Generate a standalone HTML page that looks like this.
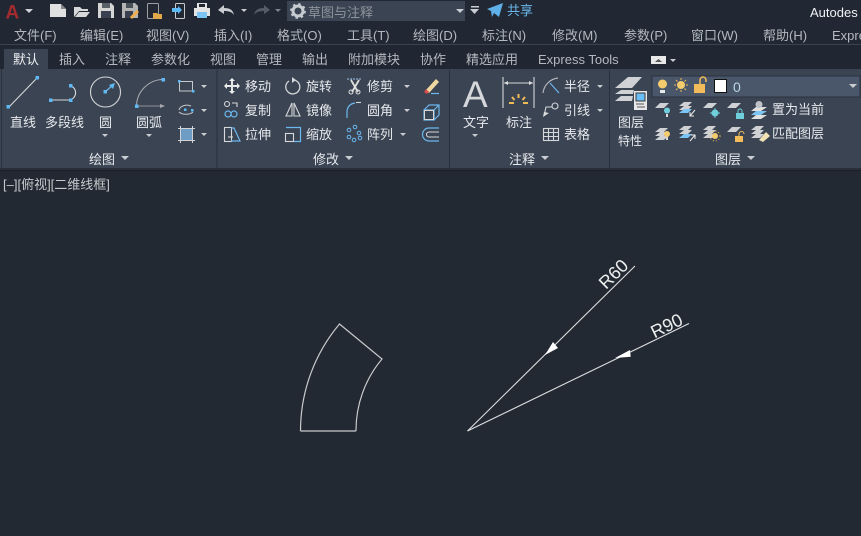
<!DOCTYPE html>
<html><head><meta charset="utf-8">
<style>
html,body{margin:0;padding:0;background:#222932;width:861px;height:536px;overflow:hidden}
svg{display:block;position:absolute;left:0;top:0}
text{font-family:"Liberation Sans","Noto Sans CJK SC",sans-serif;font-size:13px}
.m text{fill:#b4b9bf}
.r text{fill:#e6e9ec}
.d{fill:#d8dadd}
.b{fill:#5fb9f5}
.ln{fill:none;stroke:#d5d7da;stroke-width:1.1}
.bl{fill:none;stroke:#6bb8ee;stroke-width:1.2}
</style></head><body>
<svg width="861" height="536" viewBox="0 0 861 536" xmlns="http://www.w3.org/2000/svg">
<rect width="861" height="536" fill="#222932"/>
<!-- top chrome -->
<rect x="0" y="0" width="861" height="44" fill="#212833"/>
<rect x="0" y="44" width="861" height="1" fill="#3a4350"/>
<rect x="0" y="45" width="861" height="24" fill="#202733"/>
<rect x="4" y="49" width="44" height="20" fill="#3b4453"/>
<!-- ribbon -->
<rect x="0" y="69" width="861" height="99" fill="#3b4453"/>
<rect x="0" y="168" width="861" height="2" fill="#2a303a"/>
<rect x="0" y="170" width="861" height="1" fill="#1b2028"/>
<rect x="1" y="69" width="1" height="99" fill="#2d3440"/>
<rect x="216.500" y="70" width="1" height="98" fill="#2a303b"/>
<rect x="449" y="70" width="1" height="98" fill="#2a303b"/>
<rect x="609" y="70" width="1" height="98" fill="#2a303b"/>
<!-- quick access -->
<text x="5.500" y="18.500" style="font-size:19px;font-weight:bold" fill="#a32b2d">A</text>
<polygon points="25,9 33,9 29,13" fill="#cfd2d6"/>
<path d="M50 4H61L66 9V17H50Z" fill="#e0e0e0"/><path d="M61 4V9H66Z" fill="#888"/>
<path d="M74 7H80L82 9H88V11H79L74 17ZM79 12H90L86 17H75Z" fill="#d8d8d8"/>
<path d="M98 3H111L114 6V18H98Z" fill="#d5d5d5"/><rect x="102" y="3" width="8" height="5" fill="#5a6068"/><rect x="101" y="11" width="10" height="7" fill="#3a4050"/>
<path d="M122 3H135L138 6V18H122Z" fill="#b5b5b5"/><rect x="126" y="3" width="7" height="5" fill="#4a5058"/><rect x="125" y="11" width="8" height="7" fill="#3a4050"/>
<path d="M130 17L137 10L139 12L132 19Z" fill="#f2b04a"/>
<rect x="147.500" y="3.500" width="11" height="15" rx="1" fill="none" stroke="#9b9fa4"/><path d="M153 13H157L158 14H162V19H153Z" fill="#e2a94a"/>
<rect x="175.500" y="3.500" width="9" height="15" rx="1" fill="none" stroke="#c8cacc"/><path d="M172 8H178V6L182 10L178 14V12H172Z" fill="#5fb9f5"/>
<rect x="197" y="3" width="10" height="5" fill="#e4e4e4"/><rect x="194" y="8" width="16" height="8" fill="#e4e4e4"/><rect x="197" y="12" width="10" height="6" fill="#7cc4f3"/><rect x="199" y="4" width="6" height="3" fill="#212833"/>
<path d="M218 10L224 5V8C230 8 233 10 234 15C232 12 229 11 224 11V14Z" fill="#c9ccd0"/>
<polygon points="241,9 247,9 244,12" fill="#c9ccd0"/>
<path d="M270 10L264 5V8C258 8 255 10 254 15C256 12 259 11 264 11V14Z" fill="#555c66"/>
<polygon points="275,9 281,9 278,12" fill="#7f858d"/>
<rect x="287" y="1" width="178" height="20" fill="#3a4452"/>
<circle cx="298" cy="11" r="5" fill="none" stroke="#c8cbcf" stroke-width="3"/><circle cx="298" cy="11" r="7" fill="none" stroke="#c8cbcf" stroke-width="1.800" stroke-dasharray="2.500 3"/>
<text x="308" y="17" fill="#8d949d">草图与注释</text>
<polygon points="456,9 464,9 460,13" fill="#c9ccd0"/>
<rect x="471" y="6" width="8" height="1.500" fill="#c9ccd0"/><polygon points="470,9 479,9 474.500,14" fill="#c9ccd0"/>
<path d="M487 9L503 3L499 17L494 13L492 17L491 11Z" fill="#5fb0e8"/>
<text x="507" y="15" fill="#6bb8ec">共享</text>
<text x="810" y="17" fill="#f0f2f4">Autodes</text>
<!-- menu -->
<g class="m">
<text x="14" y="40">文件(F)</text><text x="80" y="40">编辑(E)</text><text x="146" y="40">视图(V)</text><text x="214" y="40">插入(I)</text><text x="277" y="40">格式(O)</text><text x="347" y="40">工具(T)</text><text x="413" y="40">绘图(D)</text><text x="482" y="40">标注(N)</text><text x="552" y="40">修改(M)</text><text x="624" y="40">参数(P)</text><text x="691" y="40">窗口(W)</text><text x="763" y="40">帮助(H)</text><text x="832" y="40">Expre</text>
</g>
<!-- tabs -->
<g class="m">
<text x="13" y="64" style="fill:#eef0f2">默认</text><text x="59" y="64">插入</text><text x="105" y="64">注释</text><text x="151" y="64">参数化</text><text x="210" y="64">视图</text><text x="256" y="64">管理</text><text x="302" y="64">输出</text><text x="348" y="64">附加模块</text><text x="420" y="64">协作</text><text x="466" y="64">精选应用</text><text x="538" y="64">Express Tools</text>
</g>
<rect x="651" y="56" width="15" height="8" fill="#e8e8e8"/><polygon points="655,62 662,62 658.500,59" fill="#555"/>
<polygon points="670,59 676,59 673,62" fill="#c9ccd0"/>
<!-- draw panel -->
<path d="M9 107L37 78" class="ln"/><rect x="6.500" y="105" width="3.500" height="3.500" class="b"/><rect x="35.500" y="76" width="3.500" height="3.500" class="b"/>
<path d="M51 100H70A7.500 7.500 0 0 0 70 85.500" class="ln"/><rect x="49" y="98.500" width="3.500" height="3.500" class="b"/><rect x="69" y="98.500" width="3.500" height="3.500" class="b"/><rect x="69" y="84" width="3.500" height="3.500" class="b"/>
<circle cx="105.500" cy="92" r="15" class="ln"/><rect x="103.500" y="90" width="3.500" height="3.500" class="b"/><path d="M105 92L114 84" class="bl"/><polygon points="115,83 113,89 109,85" class="b"/>
<path d="M136.500 106A27 27 0 0 1 163 79.500" class="ln" style="stroke:#a5a9ae"/><path d="M137 106H164" fill="none" stroke="#8d9198"/><rect x="135" y="104.500" width="3.500" height="3.500" class="b"/><rect x="161.500" y="78" width="3.500" height="3.500" class="b"/><polygon points="160,104 165,106 160,108" fill="#a5a9ae"/>
<rect x="179.500" y="81.500" width="13" height="9.500" fill="none" stroke="#c5c8cc"/><rect x="178" y="80" width="2.500" height="2.500" class="b"/><rect x="192" y="90" width="2.500" height="2.500" class="b"/>
<polygon points="201,85 207,85 204,88" fill="#c9ccd0"/>
<path d="M179 110C180 106 186 104 191 106M193 112C190 115 182 115 179 112" fill="none" stroke="#c5c8cc"/><rect x="184" y="108.500" width="2.500" height="2.500" class="b"/><rect x="191" y="109" width="2.500" height="2.500" class="b"/>
<polygon points="201,109 207,109 204,112" fill="#c9ccd0"/>
<rect x="180.500" y="128.500" width="12" height="12" fill="#6d9dc4" stroke="#d0d2d5"/><path d="M178 128.500H195M178 140.500H195M180.500 126V143M192.500 126V143" fill="none" stroke="#d0d2d5"/>
<polygon points="201,133 207,133 204,136" fill="#c9ccd0"/>
<g class="r">
<text x="10" y="127">直线</text><text x="45" y="127">多段线</text><text x="99" y="127">圆</text><text x="136" y="127">圆弧</text>
<text x="89" y="164">绘图</text><text x="313" y="164">修改</text><text x="509" y="164">注释</text><text x="715" y="164">图层</text>
<text x="245" y="91">移动</text><text x="245" y="115">复制</text><text x="245" y="139">拉伸</text>
<text x="306" y="91">旋转</text><text x="306" y="115">镜像</text><text x="306" y="139">缩放</text>
<text x="367" y="91">修剪</text><text x="367" y="115">圆角</text><text x="367" y="139">阵列</text>
<text x="463" y="127">文字</text><text x="506" y="127">标注</text>
<text x="564" y="91">半径</text><text x="564" y="115">引线</text><text x="564" y="139">表格</text>
<text x="618" y="127">图层</text><text x="618" y="145" style="font-size:12px">特性</text>
<text x="772" y="114">置为当前</text><text x="772" y="138">匹配图层</text>
</g>
<polygon points="102,134 108,134 105,137" fill="#c9ccd0"/>
<polygon points="146,134 152,134 149,137" fill="#c9ccd0"/>
<polygon points="121,156 129,156 125,160" fill="#c9ccd0"/>
<polygon points="345,156 353,156 349,160" fill="#c9ccd0"/>
<polygon points="541,156 549,156 545,160" fill="#c9ccd0"/>
<polygon points="747,156 755,156 751,160" fill="#c9ccd0"/>
<polygon points="472,134 478,134 475,137" fill="#c9ccd0"/>
<!-- modify icons -->
<path d="M232 79V93M225 86H239" stroke="#e8e8e8" stroke-width="2" fill="none"/><polygon points="232,78 235,81 229,81" fill="#eee"/><polygon points="232,94 235,91 229,91" fill="#eee"/><polygon points="224,86 227,83 227,89" fill="#eee"/><polygon points="240,86 237,83 237,89" fill="#eee"/>
<path d="M294 80A7 7 0 1 1 289 81" fill="none" stroke="#d5d7da" stroke-width="1.300"/><polygon points="292,77 296,80 292,83" fill="#d5d7da"/>
<path d="M347 79H362" stroke="#9fc9e8" stroke-dasharray="2 1" fill="none"/><path d="M351 80L358 92M359 80L352 92" stroke="#e0e0e0" stroke-width="1.800" fill="none"/><circle cx="351" cy="92" r="2" fill="none" stroke="#ddd"/><circle cx="358" cy="92" r="2" fill="none" stroke="#ddd"/>
<polygon points="404,85 410,85 407,88" fill="#c9ccd0"/>
<path d="M426 90L436 79L439 82L429 93Z" fill="#f0d9a0"/><path d="M424 92L426 89L429 92L427 94Z" fill="#d84b4b"/><path d="M431 93.500H439" class="bl"/>
<circle cx="227" cy="104" r="2.500" class="ln"/><circle cx="228" cy="114" r="3" class="bl"/><circle cx="234" cy="114" r="3" class="bl"/><path d="M232 103H237V107" class="ln"/>
<path d="M286 116L292 103V116ZM294 103L300 116H294Z" class="ln"/>
<path d="M347 118V111Q348 104 355 103" class="bl"/><path d="M356 102.500H361" class="ln"/>
<polygon points="404,109 410,109 407,112" fill="#c9ccd0"/>
<path d="M424 110H434V120H424ZM424 110L429 105H439V115L434 120M434 110L439 105" class="bl"/>
<rect x="424.500" y="110.500" width="9" height="9" fill="none" stroke="#d5d7da"/>
<rect x="224.500" y="127.500" width="7" height="14" class="ln" fill="none"/><path d="M231 128H234L240 141H231" class="bl"/><path d="M228 137H233" class="ln"/>
<rect x="285.500" y="133.500" width="8" height="8" class="ln"/><path d="M286 127.500H300.500V141.500H294" class="bl"/>
<g fill="none" stroke="#6bb8ee"><circle cx="349" cy="130" r="1.800"/><circle cx="355" cy="127" r="1.800"/><circle cx="359" cy="133" r="1.800"/><circle cx="349" cy="137" r="1.800"/><circle cx="354" cy="140" r="1.800"/><circle cx="360" cy="138" r="1.800"/></g>
<polygon points="400,133 406,133 403,136" fill="#c9ccd0"/>
<path d="M439 128H429A6.500 6.500 0 0 0 429 141H439" class="bl"/><path d="M439 132H429A2.500 2.500 0 0 0 429 137H439" class="ln"/>
<!-- annotate icons -->
<text x="463" y="107" style="font-size:37px" fill="#d5d7da">A</text>
<path d="M503 77V108M534 77V108M504 83H533" class="ln"/><polygon points="504,83 508,81 508,85" fill="#ddd"/><polygon points="533,83 529,81 529,85" fill="#ddd"/>
<g stroke="#f0bb55" stroke-width="2" fill="none"><path d="M518.500 94V98M512 97L514.500 100M525 97L522.500 100M509 103H514M523 103H528" /></g>
<path d="M543 93A17 17 0 0 1 558 78" fill="none" stroke="#b5b8bc" stroke-width="1.200"/><path d="M550 83L559 93" class="bl"/>
<polygon points="597,85 603,85 600,88" fill="#c9ccd0"/>
<circle cx="555" cy="106" r="3" class="ln"/><path d="M552 107L546 107L544 116" class="ln"/><polygon points="543,117 549,113 544,112" fill="#ddd"/>
<polygon points="597,109 603,109 600,112" fill="#c9ccd0"/>
<rect x="543.500" y="128.500" width="15" height="12" class="ln" fill="none"/><path d="M544 132.500H558M544 136.500H558M548.500 129V140M553.500 129V140" class="ln"/>
<!-- layer panel -->
<g fill="#cfd1d4"><path d="M615 88L628 77H642L632 88Z"/><path d="M615 94L621 90H634L633 94Z"/><path d="M615 101L621 96H633L632 101Z"/></g>
<rect x="634" y="91" width="13" height="19" fill="#e8e8e8"/><rect x="636" y="93" width="9" height="8" fill="#6bbdf5" stroke="#333"/><path d="M636 104H644M637 107H645" stroke="#555" fill="none"/>
<rect x="652" y="76" width="208" height="21" fill="#4a566a" stroke="#2b323e"/>
<circle cx="662.500" cy="84" r="4.500" fill="#f5cc6d"/><path d="M660 90H665V93H660Z" fill="#e8e8e8"/>
<circle cx="681" cy="85" r="4" fill="#f5cc6d"/><g stroke="#f0bb55" fill="none"><path d="M681 78V80M681 90V92M674 85H676M686 85H688M676 80L677.500 81.500M686 80L684.500 81.500M676 90L677.500 88.500M686 90L684.500 88.500"/></g>
<rect x="694" y="84" width="11" height="9" fill="#f2bc5a"/><path d="M700 84V80A3 3 0 0 1 706 80V82" fill="none" stroke="#f2bc5a" stroke-width="1.500"/>
<rect x="714.500" y="79.500" width="12" height="13" fill="#fff" stroke="#111"/>
<text x="733" y="92" style="font-size:14px" fill="#b9d4ec">0</text>
<polygon points="849,84 857,84 853,88" fill="#c9ccd0"/>
<!-- layer rows -->
<g fill="#cfd1d4"><path d="M655 108L660 103H669L664 108Z"/><path d="M703 108L708 103H717L712 108Z"/><path d="M727 108L732 103H741L736 108Z"/><path d="M679 106L684 102H692L688 106Z"/><path d="M679 110L684 106H692L688 110Z"/><path d="M655 132L660 128H668L664 132Z"/><path d="M655 136L660 132H668L664 136Z"/><path d="M655 140L660 136H668L664 140Z"/><path d="M679 130L684 126H692L688 130Z"/><path d="M703 130L708 126H716L712 130Z"/><path d="M703 134L708 130H716L712 134Z"/><path d="M703 138L708 134H716L712 138Z"/><path d="M727 132L732 127H741L736 132Z"/><path d="M751 130L756 126H764L760 130Z"/><path d="M751 134L756 130H764L760 134Z"/><path d="M751 138L756 134H764L760 138Z"/></g>
<circle cx="667" cy="110.500" r="3" fill="#6fd0dc"/><rect x="666" y="114" width="2" height="3" fill="#ddd"/>
<path d="M679 113L684 109H692L688 113Z" fill="#7cc4f3"/><path d="M695 110L690 116M690 112V116H694" stroke="#eee" fill="none"/>
<circle cx="715" cy="113" r="3.500" fill="#6fd0dc"/><path d="M715 108V118M710 113H720" stroke="#6fd0dc"/>
<rect x="736" y="113" width="8" height="6" fill="#6fd0dc"/><path d="M738 113V111A2 2 0 0 1 742 111V113" fill="none" stroke="#6fd0dc"/>
<path d="M751 111L756 107H767L761 111Z" fill="#e0e0e0"/><path d="M751 115L756 111H767L761 115Z" fill="#7cc4f3"/><path d="M751 119L756 115H767L761 119Z" fill="#e0e0e0"/><circle cx="759" cy="104.500" r="3.500" fill="#bfc2c6"/>
<circle cx="667" cy="134" r="3" fill="#f5cc6d"/><rect x="666" y="137" width="2" height="3" fill="#ddd"/>
<path d="M679 134L684 130H692L688 134Z" fill="#cfd1d4"/><path d="M679 138L684 134H692L688 138Z" fill="#7cc4f3"/><path d="M690 141L695 135M691 135H695V139" stroke="#eee" fill="none"/>
<circle cx="715" cy="136" r="3" fill="#f5cc6d"/><circle cx="715" cy="136" r="5" fill="none" stroke="#f0bb55" stroke-dasharray="1 2"/>
<rect x="735" y="136" width="8" height="6" fill="#f2bc5a"/><path d="M739 136V134A2 2 0 0 1 744 134" fill="none" stroke="#f2bc5a"/>
<path d="M759 140L766 132L770 136L763 142Z" fill="#f0e2b5"/>
<!-- canvas -->
<text x="3" y="189" fill="#c5c9cd">[–][俯视][二维线框]</text>
<g fill="none" stroke="#c9cbcd" stroke-width="1.200">
<path d="M300.500 431H356"/>
<path d="M300.500 431A166.500 166.500 0 0 1 339.500 324L382 359A111 111 0 0 0 356 431"/>
</g>
<g fill="none" stroke="#dcdddf" stroke-width="1.100">
<path d="M467.500 431L635 266"/><path d="M467.500 431L689 323.500"/>
</g>
<polygon points="545,355 553,342 558,348" fill="#fff"/>
<polygon points="615,358 630,350 630.700,356.700" fill="#fff"/>
<text transform="translate(606,290) rotate(-44.500)" style="font-size:18px" fill="#eceded">R60</text>
<text transform="translate(654.500,338.500) rotate(-26)" style="font-size:18px" fill="#eceded">R90</text>
</svg>
</body></html>
